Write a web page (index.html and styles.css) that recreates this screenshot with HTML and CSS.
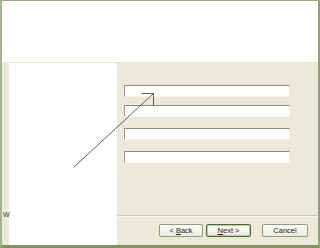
FILE: index.html
```html
<!DOCTYPE html>
<html>
<head>
<meta charset="utf-8">
<link rel="stylesheet" href="styles.css">
</head>
<body>
<div class="win">
  <div class="header"></div>
  <div class="body">
    <div class="side"></div>
    <div class="main">
      <div class="fields">
        <div class="box b1"></div>
        <div class="box b2"></div>
        <div class="box b3"></div>
        <div class="box b4"></div>
      </div>
      <div class="sep"></div>
      <div class="buttons">
        <button class="btn back">&lt; <u>B</u>ack</button>
        <button class="btn next default"><u>N</u>ext &gt;</button>
        <button class="btn cancel">Cancel</button>
      </div>
    </div>
  </div>
  <span class="stray">W</span>
  <svg class="arrow" width="320" height="248" viewBox="0 0 320 248">
    <path d="M73.5 167.5 L153.5 93.5 M141.5 93.5 H153.5 V105.5" fill="none" stroke="#3a3a3a" stroke-width="0.8"/>
  </svg>
</div>
</body>
</html>
```
FILE: styles.css
```css
* { box-sizing: border-box; }
html, body { margin: 0; padding: 0; }
body { width: 320px; height: 248px; overflow: hidden; background: #fff; font-family: "Liberation Sans", Arial, sans-serif; }
.win {
  position: relative;
  width: 320px;
  height: 248px;
  display: flex;
  flex-direction: column;
  background: #ece9d8;
  border-top: 1px solid #9aab82;
  border-left: 2px solid #a4b48c;
  border-right: 2px solid #8fa273;
  border-bottom: 3px solid #7f9462;
}
.header {
  height: 62px;
  flex: none;
  background: #fffffd;
  border-bottom: 1px solid #e6e4da;
}
.body {
  flex: 1;
  display: flex;
  padding-left: 7px;
  min-height: 0;
}
.side {
  width: 108px;
  background: #fff;
  flex: none;
}
.main {
  flex: 1;
  display: flex;
  flex-direction: column;
}
.fields {
  padding-left: 7px;
  height: 152px;
}
.box {
  width: 166px;
  height: 12px;
  background: #fff;
  border-top: 1px solid #8a8a80;
  border-left: 1px solid #9a9a90;
  border-right: 1px solid #f0efe8;
  border-bottom: 1px solid #f4f3ee;
}
.b1 { margin-top: 22px; }
.b2 { margin-top: 8px; }
.b3 { margin-top: 11px; }
.b4 { margin-top: 11px; }
.sep {
  height: 2px;
  border-top: 1px solid #cfcdbf;
  border-bottom: 1px solid #f7f6f0;
}
.buttons {
  display: flex;
  justify-content: flex-end;
  padding: 7px 10px 0 0;
  gap: 3px;
}
.btn {
  height: 13px;
  padding: 0;
  margin: 0;
  font-family: "Liberation Sans", Arial, sans-serif;
  font-size: 7.5px;
  line-height: 11px;
  color: #222;
  background: linear-gradient(#fdfdf8, #ecebe2);
  border: 1px solid #8c9c7c;
  border-radius: 2px;
}
.back { width: 44px; }
.next { width: 45px; border-color: #4f6a3a; box-shadow: inset 0 0 0 1px #b8cca0; }
.cancel { width: 46px; margin-left: 8px; }
.stray {
  position: absolute;
  left: 1px;
  top: 210px;
  font-size: 7px;
  color: #333;
}
.arrow {
  position: absolute;
  left: -2px;
  top: -1px;
  pointer-events: none;
}
```
